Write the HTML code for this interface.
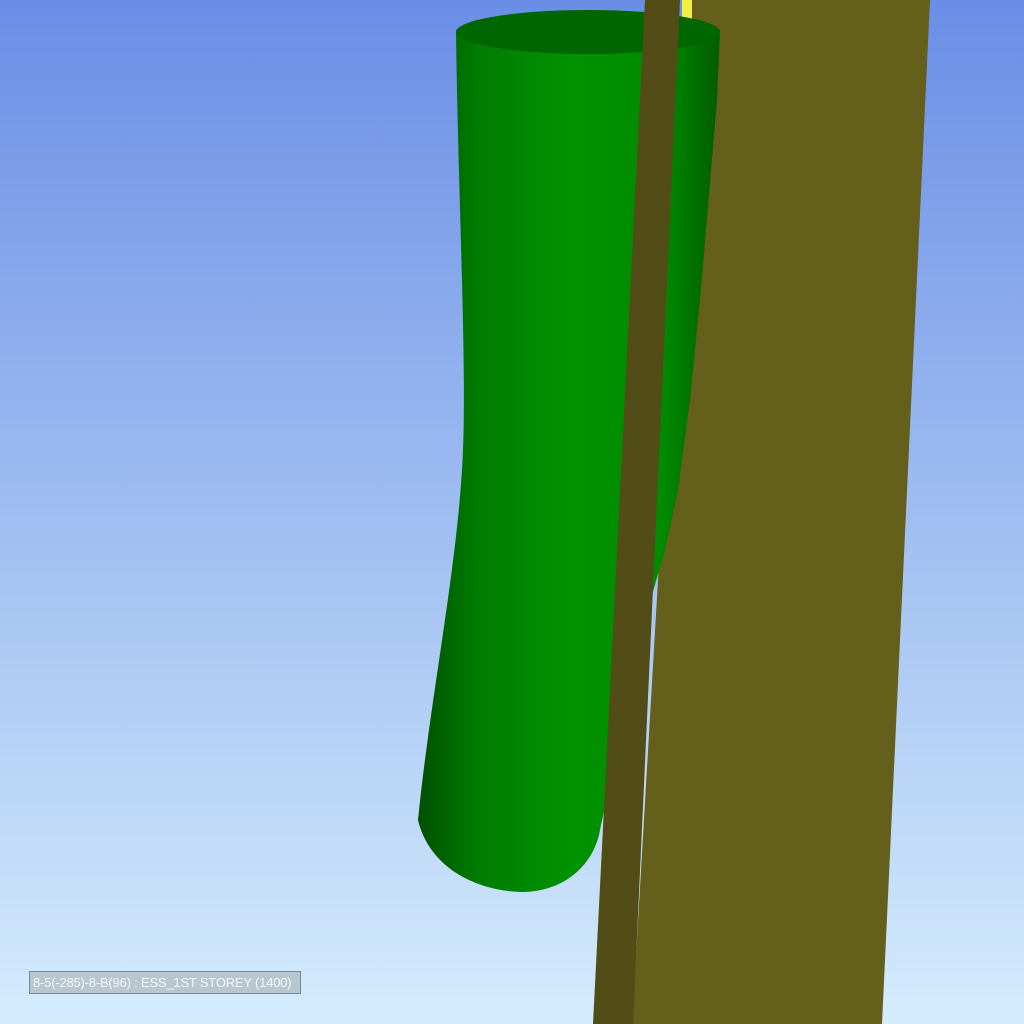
<!DOCTYPE html>
<html><head><style>
html,body{margin:0;padding:0;width:1024px;height:1024px;overflow:hidden}
.bg{position:absolute;left:0;top:0;width:1024px;height:1024px;background:linear-gradient(#6a8ee6,#d4ecfc)}
svg{position:absolute;left:0;top:0}
.lbl{position:absolute;left:29px;top:971px;width:272px;height:23px;box-sizing:border-box;border:1px solid #7a8896;background:#b8c6d0;color:#f4f8fa;font:13px "Liberation Sans",sans-serif;line-height:21px;padding-left:3px;white-space:nowrap;letter-spacing:-0.2px}
</style></head><body>
<div class="bg"></div>
<svg width="1024" height="1024" viewBox="0 0 1024 1024">
<defs>
<linearGradient id="g" x1="0" x2="1" y1="0" y2="0">
<stop offset="0" stop-color="#005000"/>
<stop offset="0.2" stop-color="#007c00"/>
<stop offset="0.5" stop-color="#009200"/>
<stop offset="0.8" stop-color="#008c00"/>
<stop offset="1" stop-color="#005c00"/>
</linearGradient>
</defs>
<polygon points="692,0 930,0 882,1024 632,1024" fill="#645f1a"/>
<polygon points="682,0 692,0 692,20 682,20" fill="#f0f040"/>
<path d="M456 30 C458 200 468 380 462 470 C455 580 430 700 418 820 C430 870 480 892 525 892 C570 890 595 860 600 830 C615 760 640 660 652 595 L665 550 L678 490 L690 400 L700 300 L717 100 L720 30 Z" fill="url(#g)"/>
<ellipse cx="588" cy="32" rx="132" ry="22" fill="#006600"/>
<polygon points="645,0 680,0 633,1024 593,1024" fill="#524c17"/>
</svg>
<div class="lbl">8-5(-285)-8-B(96) : ESS_1ST STOREY (1400)</div>
</body></html>
